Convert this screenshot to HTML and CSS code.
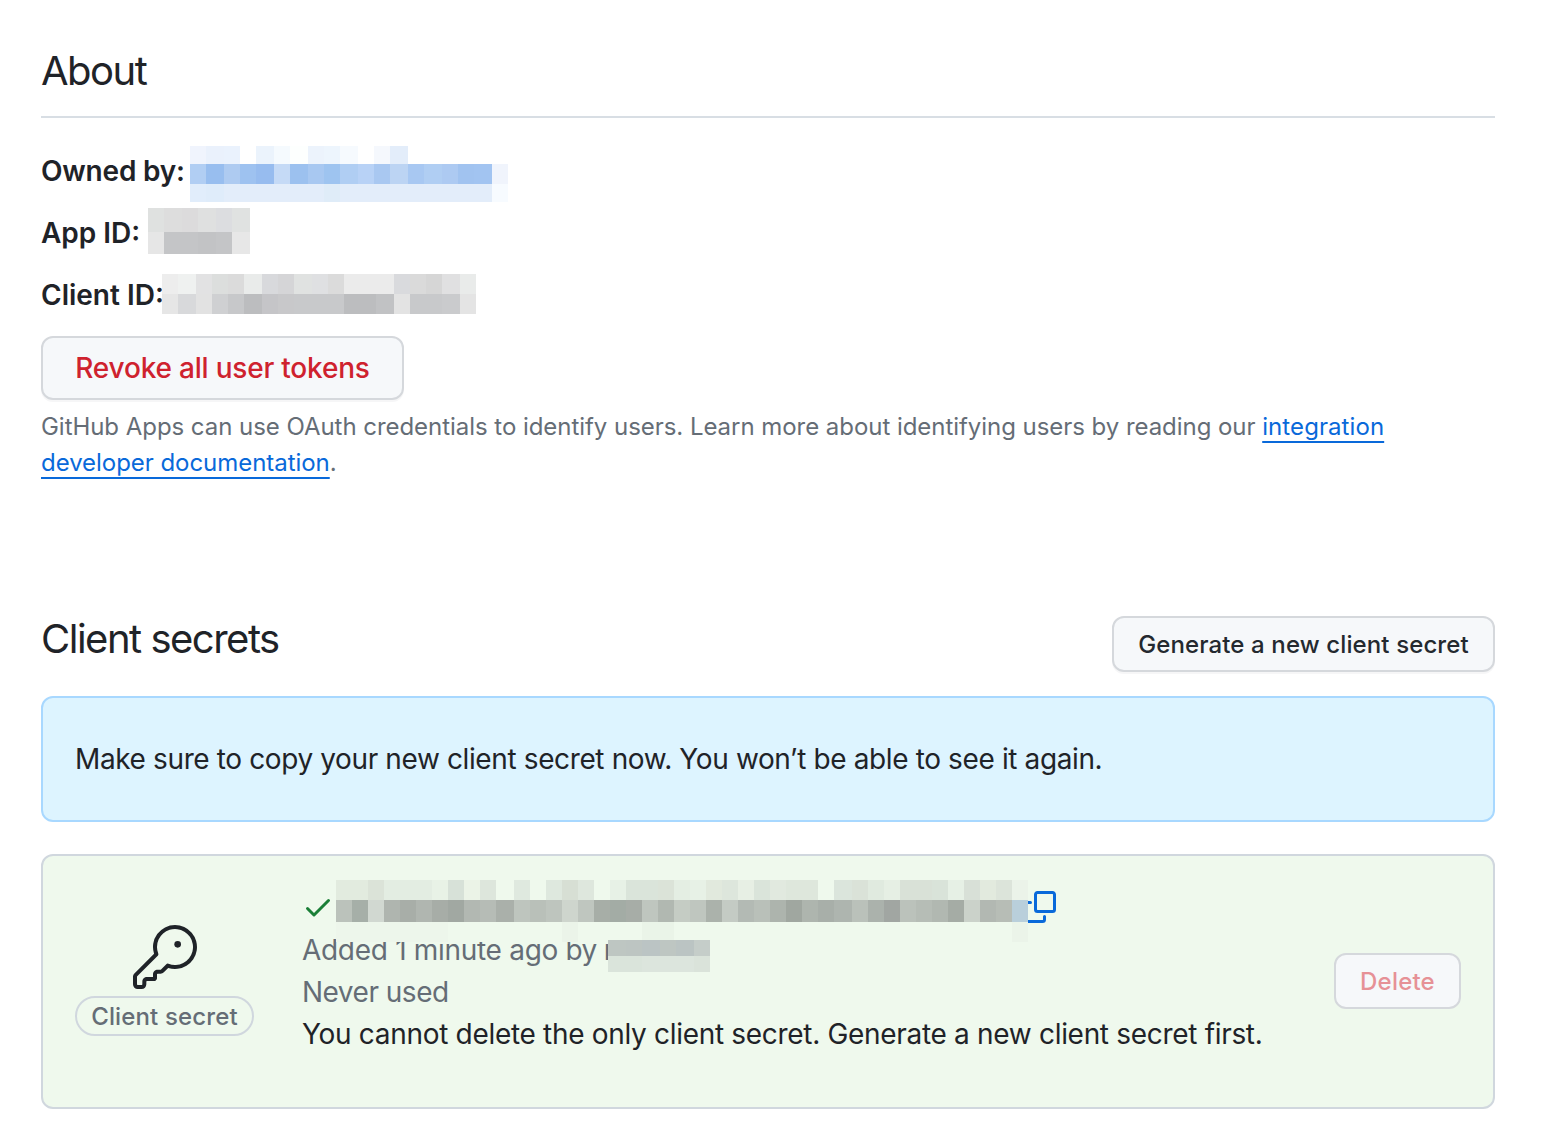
FILE: index.html
```html
<!DOCTYPE html>
<html lang="en">
<head>
<meta charset="utf-8">
<title>GitHub App settings</title>
<link rel="stylesheet" href="styles.css">
</head>
<body>
<main class="page">
  <section class="about">
    <h2 class="heading about-heading">About</h2>
    <div class="field"><b class="owner-name">Owned by:</b><span class="mosaic mosaic-owner"></span></div>
    <div class="field"><b>App ID:</b><span class="mosaic mosaic-app"></span></div>
    <div class="field"><b>Client ID:</b><span class="mosaic mosaic-client"></span></div>
    <button class="btn btn-large btn-danger" type="button">Revoke all user tokens</button>
    <p class="note">GitHub Apps can use OAuth credentials to identify users. Learn more about identifying users by reading our <a class="link" href="#"><span class="link-first">integration</span><br>developer documentation</a>.</p>
  </section>

  <section class="secrets">
    <div class="secrets-head">
      <h2 class="heading">Client secrets</h2>
      <button class="btn" type="button">Generate a new client secret</button>
    </div>
    <div class="flash">Make sure to copy your new client secret now. You won’t be able to see it again.</div>
    <div class="secret">
      <div class="secret-kind">
        <svg class="key" viewBox="0 0 24 24" width="64" height="64" fill="currentColor"><path d="M16.75 8.5a1.25 1.25 0 1 0 0-2.5 1.25 1.25 0 0 0 0 2.5Z"/><path d="M15.75 0a8.25 8.25 0 1 1-2.541 16.101l-1.636 1.636a1.744 1.744 0 0 1-1.237.513H9.25a.25.25 0 0 0-.25.25v1.448a.876.876 0 0 1-.256.619l-.214.213a.75.75 0 0 1-.545.22H5.25a.25.25 0 0 0-.25.25v1A1.75 1.75 0 0 1 3.25 24h-1.5A1.75 1.75 0 0 1 0 22.25v-2.836c0-.464.185-.908.513-1.236l7.386-7.388A8.249 8.249 0 0 1 15.75 0ZM9 8.25a6.733 6.733 0 0 0 .463 2.462.75.75 0 0 1-.168.804l-7.722 7.721a.25.25 0 0 0-.073.177v2.836c0 .138.112.25.25.25h1.5a.25.25 0 0 0 .25-.25v-1c0-.966.784-1.75 1.75-1.75H7.5v-1c0-.966.784-1.75 1.75-1.75h1.086a.25.25 0 0 0 .177-.073l1.971-1.972a.75.75 0 0 1 .804-.168A6.75 6.75 0 1 0 9 8.25Z"/></svg>
        <span class="label">Client secret</span>
      </div>
      <div class="secret-info">
        <div class="secret-value">
          <svg class="check" viewBox="0 0 16 16" width="32" height="32" fill="currentColor"><path d="M13.78 4.22a.75.75 0 0 1 0 1.06l-7.25 7.25a.75.75 0 0 1-1.06 0L2.22 9.28a.751.751 0 0 1 .018-1.042.751.751 0 0 1 1.042-.018L6 10.94l6.72-6.72a.75.75 0 0 1 1.06 0Z"/></svg>
          <span class="mosaic mosaic-secret"></span>
          <svg class="copy" viewBox="0 0 16 16" width="32" height="32" fill="currentColor"><path d="M0 6.75C0 5.784.784 5 1.75 5h1.5a.75.75 0 0 1 0 1.5h-1.5a.25.25 0 0 0-.25.25v7.5c0 .138.112.25.25.25h7.5a.25.25 0 0 0 .25-.25v-1.5a.75.75 0 0 1 1.5 0v1.5A1.75 1.75 0 0 1 9.25 16h-7.5A1.75 1.75 0 0 1 0 14.25Z"/><path d="M5 1.75C5 .784 5.784 0 6.75 0h7.5C15.216 0 16 .784 16 1.75v7.5A1.75 1.75 0 0 1 14.25 11h-7.5A1.75 1.75 0 0 1 5 9.25Zm1.75-.25a.25.25 0 0 0-.25.25v7.5c0 .138.112.25.25.25h7.5a.25.25 0 0 0 .25-.25v-7.5a.25.25 0 0 0-.25-.25Z"/></svg>
        </div>
        <div class="line muted"><span class="added">Added 1 minute ago <span class="by">by </span>r</span><span class="mosaic mosaic-user"></span></div>
        <div class="line muted unused">Never used</div>
        <div class="line">You cannot delete the only client secret. Generate a new client secret first.</div>
      </div>
      <button class="btn btn-danger btn-off" type="button" disabled>Delete</button>
    </div>
  </section>
</main>
</body>
</html>
```
FILE: styles.css
```css
* { box-sizing: border-box; }
body {
  margin: 0;
  background: #fff;
  color: #1f2328;
  font: 28px/42px Inter, "Liberation Sans", sans-serif;
}
.page { width: 1558px; height: 1138px; padding: 41px 63px 0 41px; overflow: hidden; }
.heading { margin: 0; font-size: 40px; line-height: 60px; font-weight: 430; letter-spacing: -1.5px; }
.about { height: 575px; }
.about-heading { height: 77px; border-bottom: 2px solid #d8dee4; margin-bottom: 22px; }
.field { display: flex; height: 62px; line-height: 62px; }
.field b { width: 99px; font-weight: 600; white-space: nowrap; }
.field .owner-name { width: 144px; letter-spacing: -.2px; }
.note { margin: 9px 0 0; color: #656d76; font-size: 24px; line-height: 36px; letter-spacing: -.045px; white-space: nowrap; }
.link { color: #0969da; text-decoration: underline; text-decoration-thickness: 2px; text-underline-offset: 6px; }
.link-first { letter-spacing: .08px; }

.btn {
  display: flex;
  align-items: center;
  justify-content: center;
  height: 56px;
  width: 383px;
  padding: 1px 0 0;
  border: 2px solid #d5d8dc;
  border-radius: 12px;
  background: #f6f8fa;
  box-shadow: 0 2px 0 rgba(31, 35, 40, .04);
  color: #24292f;
  font: 500 24px/40px Inter, "Liberation Sans", sans-serif;
  letter-spacing: .12px;
  white-space: nowrap;
}
.btn-large { width: 363px; height: 64px; margin-top: 10px; padding: 0; font-size: 28px; letter-spacing: -.2px; }
.btn-danger { color: #cf222e; }
.btn-off { width: 127px; padding-top: 2px; color: #e69196; box-shadow: none; letter-spacing: .2px; }

.secrets-head { display: flex; justify-content: space-between; height: 56px; }
.secrets-head .heading { margin-top: -7px; }
.flash {
  display: flex;
  align-items: center;
  height: 126px;
  margin: 24px 0 32px;
  padding: 0 32px;
  border: 2px solid #a8d8ff;
  border-radius: 12px;
  background: #ddf4ff;
  letter-spacing: -.38px;
  white-space: nowrap;
}
.secret {
  display: flex;
  align-items: center;
  height: 255px;
  padding: 0 32px 2px;
  border: 2px solid #d0d7de;
  border-radius: 12px;
  background: #eff9ed;
}
.secret-kind { display: flex; flex-direction: column; align-items: center; width: 179px; }
.key { display: block; margin-bottom: 7px; }
.label {
  display: flex;
  align-items: center;
  justify-content: center;
  width: 179px;
  height: 40px;
  padding-top: 2px;
  border: 2px solid #d0d7de;
  border-radius: 20px;
  color: #656d76;
  font-size: 24px;
  line-height: 36px;
  font-weight: 500;
  letter-spacing: .15px;
  white-space: nowrap;
}
.secret-info { flex: 1; height: 249px; padding: 24px 0 0 48px; }
.secret-value { display: flex; height: 49px; }
.check { flex: none; margin-top: 11px; color: #1a7f37; }
.copy { flex: none; margin: 11px 0 0 -4px; color: #0969da; }
.line { display: flex; height: 42px; letter-spacing: -.31px; white-space: nowrap; }
.muted { color: #656d76; }
.added { width: 314px; letter-spacing: -.3px; }
.by { letter-spacing: -.7px; }
.unused { letter-spacing: -.5px; }

.mosaic { position: relative; z-index: 1; flex: none; background-repeat: no-repeat; }
.mosaic-owner {
  width: 318px;
  height: 56px;
  margin: 6px 0 0 5px;
  background-image:
    linear-gradient(90deg, #f0f4fd 0 16px, #eaf1fc 0 34px, #eaf2fd 0 50px, #fff 0 66px, #ebf3fc 0 84px, #f5fafe 0 100px, #fdfffe 0 118px, #ecf3fc 0 134px, #edf5fd 0 150px, #f6fafe 0 168px, #fff 0 184px, #f5f8fd 0 200px, #e3edfa 0 218px, #fff 0),
    linear-gradient(90deg, #b1cef3 0 16px, #98beef 0 34px, #aecbf1 0 50px, #9ec2f0 0 66px, #97bcef 0 84px, #c5daf6 0 100px, #9cc1ef 0 118px, #a8c8f1 0 134px, #9ec4f0 0 150px, #b0cef3 0 168px, #b8d2f6 0 184px, #a9c8f1 0 200px, #bcd4f3 0 218px, #a8c8f2 0 234px, #b0cef3 0 252px, #adcaf2 0 268px, #a1c3f0 0 284px, #a2c4f1 0 302px, #f0f4fc 0),
    linear-gradient(90deg, #e1edfb 0 16px, #dfecfa 0 34px, #e3edfa 0 134px, #dfecf8 0 150px, #e3edfa 0 302px, #f7fbff 0);
  background-size: 100% 18px, 100% 20px, 100% 18px;
  background-position: 0 0, 0 18px, 0 38px;
}
.mosaic-app {
  width: 102px;
  height: 46px;
  margin: 6px 0 0 8px;
  background-image:
    linear-gradient(90deg, #dfe1e0 0 16px, #dddddd 0 34px, #dcdbdc 0 50px, #dfe0e0 0 68px, #dcdde0 0 84px, #e0e2e1 0),
    linear-gradient(90deg, #e6e6e6 0 16px, #c4c5c7 0 50px, #c2c3c5 0 68px, #c4c5c7 0 84px, #e7e7e7 0);
  background-size: 100% 24px, 100% 22px;
  background-position: 0 0, 0 24px;
}
.mosaic-client {
  width: 314px;
  height: 40px;
  margin: 10px 0 0 22px;
  background-image:
    linear-gradient(90deg, #ededed 0 16px, #eff1f0 0 34px, #e2e2e3 0 50px, #dcdedd 0 66px, #dbdbdb 0 82px, #e9ebea 0 100px, #d8d9dc 0 116px, #d5d5d7 0 132px, #e0e2e1 0 150px, #dfe0e2 0 166px, #dbdbdb 0 182px, #ebebeb 0 232px, #d9dadd 0 248px, #dadada 0 264px, #d6d6d6 0 280px, #e0e0e1 0 298px, #e9ebea 0),
    linear-gradient(90deg, #e6e6e6 0 16px, #d8d9db 0 34px, #e2e2e2 0 50px, #cfd0d2 0 66px, #c7c8ca 0 82px, #bcbdbf 0 100px, #c5c5c8 0 116px, #c8c8ca 0 132px, #c8c9cb 0 182px, #bcbdbf 0 214px, #c1c2c4 0 232px, #e3e3e3 0 248px, #c8c9cb 0 280px, #cacbcd 0 298px, #e4e4e4 0);
  background-size: 100% 20px;
  background-position: 0 0, 0 20px;
}
.mosaic-secret {
  width: 692px;
  height: 62px;
  margin-left: 2px;
  background-color: #eff9ed;
  background-image:
    linear-gradient(90deg, #e2ebdf 0 32px, #dbe3d8 0 48px, #e3ede2 0 96px, #e8f2e6 0 112px, #d7e1d8 0 128px, #ebf3e7 0 144px, #dde6dc 0 160px, #eff9ed 0 178px, #dfe9df 0 194px, #eff9ed 0 210px, #dee8de 0 226px, #d7dfd4 0 242px, #dee7dd 0 258px, #eff9ed 0 274px, #e7f1e6 0 290px, #dae4da 0 322px, #dbe3d8 0 338px, #e4eee3 0 354px, #e7f1e6 0 370px, #e1e9dd 0 386px, #dde6dc 0 402px, #e7efe4 0 418px, #dae4da 0 434px, #e1e9df 0 450px, #dee7dc 0 482px, #eff9ed 0 498px, #dbe5dc 0 516px, #dae2d8 0 532px, #e0eadf 0 548px, #e6efe4 0 564px, #d9e1d7 0 596px, #d9e3d9 0 612px, #e6f0e5 0 628px, #d8e0d7 0 644px, #e2eade 0 660px, #dce4da 0 676px, #ebf3e9 0),
    linear-gradient(90deg, #bbc2bb 0 16px, #a6afa8 0 32px, #d1d8d1 0 48px, #afb5af 0 64px, #a8aea8 0 80px, #b0b6b0 0 96px, #a7ada7 0 112px, #a1a8a2 0 128px, #b2b8b2 0 144px, #b6bcb6 0 160px, #aab0aa 0 178px, #bec5be 0 194px, #b9c0b9 0 210px, #bec5be 0 226px, #ced5cd 0 242px, #bfc6bf 0 258px, #a7aea7 0 274px, #a3aca5 0 290px, #a7ada7 0 306px, #bfc6bf 0 322px, #b1b8b1 0 338px, #c5ccc4 0 354px, #bfc6bf 0 370px, #abb2ab 0 386px, #c4cbc4 0 402px, #b3bab4 0 418px, #b9c0b9 0 434px, #adb4ad 0 450px, #a0a7a0 0 466px, #aeb5ae 0 482px, #a8afa9 0 498px, #aeb5af 0 516px, #bac1ba 0 532px, #abb2ac 0 548px, #a1a6a2 0 564px, #bbc2bb 0 580px, #b6bdb6 0 596px, #b1b8b1 0 612px, #a5aca5 0 628px, #cbd2ca 0 644px, #b2b8b2 0 660px, #b7bdb6 0 676px, #b9cfdb 0),
    linear-gradient(90deg, #edf6eb 0 112px, #eff9ed 0 226px, #ebf4e9 0 242px, #eff9ed 0 306px, #eaf4e8 0 338px, #eff9ed 0 676px, #ebf4e9 0);
  background-size: 100% 20px, 100% 22px, 100% 20px;
  background-position: 0 0, 0 20px, 0 42px;
}
.mosaic-user {
  width: 102px;
  height: 32px;
  margin: 11px 0 0 -8px;
  background-image:
    linear-gradient(90deg, #bec6c2 0 18px, #bdc5c2 0 34px, #bbc4c4 0 52px, #bec6c2 0 68px, #bbc4c3 0 86px, #c5cdc9 0),
    linear-gradient(90deg, #dae4db 0 34px, #dce5dd 0 86px, #dae3da 0);
  background-size: 100% 16px;
  background-position: 0 0, 0 16px;
}
```
